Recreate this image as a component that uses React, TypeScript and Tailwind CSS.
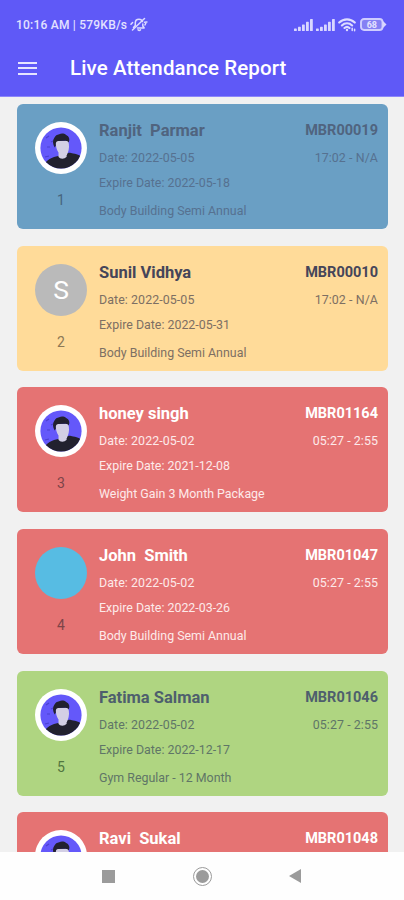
import clsx from "clsx";

interface Member {
  name: string;
  code: string;
  date?: string;
  time?: string;
  expire?: string;
  plan?: string;
  avatar: "photo" | "letter" | "blank";
  card: string;
  title: string;
  text: string;
  count: string;
}

const red = {
  card: "bg-[#e57373]",
  title: "text-white",
  text: "text-[#fdeaea]",
  count: "text-[#7d4448]",
};

const members: Member[] = [
  {
    name: "Ranjit  Parmar",
    code: "MBR00019",
    date: "2022-05-05",
    time: "17:02 - N/A",
    expire: "2022-05-18",
    plan: "Body Building Semi Annual",
    avatar: "photo",
    card: "bg-[#6a9fc4]",
    title: "text-[#50647f]",
    text: "text-[#567190]",
    count: "text-[#47657d]",
  },
  {
    name: "Sunil Vidhya",
    code: "MBR00010",
    date: "2022-05-05",
    time: "17:02 - N/A",
    expire: "2022-05-31",
    plan: "Body Building Semi Annual",
    avatar: "letter",
    card: "bg-[#ffdb99]",
    title: "text-[#454559]",
    text: "text-[#7d6f63]",
    count: "text-[#8c7855]",
  },
  {
    name: "honey singh",
    code: "MBR01164",
    date: "2022-05-02",
    time: "05:27 - 2:55",
    expire: "2021-12-08",
    plan: "Weight Gain 3 Month Package",
    avatar: "photo",
    ...red,
  },
  {
    name: "John  Smith",
    code: "MBR01047",
    date: "2022-05-02",
    time: "05:27 - 2:55",
    expire: "2022-03-26",
    plan: "Body Building Semi Annual",
    avatar: "blank",
    ...red,
  },
  {
    name: "Fatima Salman",
    code: "MBR01046",
    date: "2022-05-02",
    time: "05:27 - 2:55",
    expire: "2022-12-17",
    plan: "Gym Regular - 12 Month",
    avatar: "photo",
    card: "bg-[#afd581]",
    title: "text-[#4e5f6d]",
    text: "text-[#5f7567]",
    count: "text-[#52763f]",
  },
  {
    name: "Ravi  Sukal",
    code: "MBR01048",
    avatar: "photo",
    ...red,
  },
];

const Signal = () => (
  <svg width="19" height="12" viewBox="0 0 19 12" fill="#d9d7ff">
    <rect x="0" y="9.5" width="2.8" height="2.5" rx=".6" />
    <rect x="4" y="7.8" width="2.8" height="4.2" rx=".6" />
    <rect x="8" y="5.4" width="2.8" height="6.6" rx=".6" />
    <rect x="12" y="2.8" width="2.8" height="9.2" rx=".6" />
    <rect x="16" y="0" width="2.8" height="12" rx=".6" />
  </svg>
);

const Muted = () => (
  <svg width="18" height="15" viewBox="0 0 18 15" fill="none" stroke="#dddcff" strokeWidth="1.5" strokeLinecap="round" strokeLinejoin="round">
    <path d="M3.5 10.5 5.3 8.5V6C5.3 3.8 7 2.3 9 2.3c1.8 0 3 .9 3.5 2.3M12.8 7v2l1.4 2H7.5M8 12.8c.7.8 1.8.8 2.5 0" />
    <path d="M2.5 13 14.5 1.5M1 7.2 2.6 5.5M14.5 5.2l2.4-.3M15 8l1.2-2.8" />
  </svg>
);

const Wifi = () => (
  <svg width="19" height="14" viewBox="0 0 19 14" fill="none" stroke="#dddcff" strokeWidth="2.1" strokeLinecap="round">
    <path d="M1.2 4.6c4.4-4.3 11.2-4.3 15.6 0M3.9 7.4c2.9-2.8 7.3-2.8 10.2 0M6.5 10c1.5-1.4 3.5-1.4 5 0" />
    <circle cx="9" cy="12" r="1.2" fill="#dddcff" stroke="none" />
    <path d="M14.2 10.2v2.4M16.6 12.8v-1.6" strokeWidth="1.5" />
  </svg>
);

const Battery = () => (
  <svg width="27" height="13" viewBox="0 0 27 13">
    <rect x="1" y="1" width="21.5" height="11" rx="3" fill="#8580f4" stroke="#cfcdff" strokeWidth="1.9" />
    <path d="M22.5 2.5 26.5 6.5 22.5 10.5Z" fill="#d9d7ff" />
    <text x="11.8" y="9.7" textAnchor="middle" fontSize="9" fontWeight="700" fill="#e3e2ff">
      68
    </text>
  </svg>
);

const Photo = () => (
  <svg className="size-[52px]" viewBox="0 0 52 52">
    <defs>
      <clipPath id="face">
        <circle cx="26" cy="26" r="20.6" />
      </clipPath>
    </defs>
    <circle cx="26" cy="26" r="26" fill="#fff" />
    <g clipPath="url(#face)">
      <rect width="52" height="52" fill="#6458fa" />
      <path d="m11 16 3-2M12 25h3M10 35l4-1M16 20l2-1" stroke="#4b40d0" strokeWidth="1.2" />
      <path d="M8 48c1-8 4-10 11-13l8-2c4-1 6-3 9-2 6 1 9 2 11 5v12H8Z" fill="#22212f" />
      <path d="M20.6 19h12.6c1.2 4 1.2 8-.5 12l-1.2 2.8.2 1c-2.3 2.6-6.8 2.6-8.2 0v-4.3c-2-2.5-2.8-6.5-2.9-11.5Z" fill="#d3cfe5" />
      <path d="M19.7 25.5c-2-3.1-2.3-7-.5-9.5 1.2-2.4 2.8-3.5 5-3.8 2.2-1 5-.8 7 .8 3 1.4 3.9 4 2.6 7.4-.7-1-1.7-1.6-3.2-1.7l-7.5.3c-2.1.2-2.6 2-2.2 4.5Z" fill="#22212f" />
    </g>
  </svg>
);

const Avatar = ({ type, name }: { type: Member["avatar"]; name: string }) => {
  if (type === "photo") return <Photo />;
  return (
    <div
      className={clsx(
        "flex size-[52px] items-center justify-center rounded-full text-[26.5px] text-white",
        type === "letter" ? "bg-[#bababa]" : "bg-[#57bce3]"
      )}
    >
      {type === "letter" && name[0]}
    </div>
  );
};

const MemberCard = ({ member, index }: { member: Member; index: number }) => (
  <div className={clsx("flex h-[125px] shrink-0 rounded-[6px] pr-[10px] pl-[18px]", member.card)}>
    <div className="flex w-[52px] shrink-0 flex-col items-center pt-[18px]">
      <Avatar type={member.avatar} name={member.name} />
      {member.date && <span className={clsx("mt-4 text-[14px] leading-5", member.count)}>{index}</span>}
    </div>
    <div className={clsx("ml-3 flex-1 pt-[17px] text-[12.4px] leading-5", member.text)}>
      <div className={clsx("flex justify-between font-bold", member.title)}>
        <span className="text-[16.5px] whitespace-pre">{member.name}</span>
        <span className="text-[14.5px]">{member.code}</span>
      </div>
      {member.date && (
        <>
          <div className="mt-[7px] flex justify-between tracking-[0.08px]">
            <span>Date: {member.date}</span>
            <span>{member.time}</span>
          </div>
          <div className="mt-[5px]">Expire Date: {member.expire}</div>
          <div className="mt-2">{member.plan}</div>
        </>
      )}
    </div>
  </div>
);

export default function App() {
  return (
    <div className="flex h-[900px] w-[404px] flex-col overflow-hidden bg-[#f1f1f1] font-['Roboto',sans-serif]">
      <header className="h-[97px] shrink-0 border-b border-[#8c86fa] bg-[#5f59f7] text-white">
        <div className="flex h-[49px] items-center justify-between pr-[17px] pl-4 text-[#e3e2ff]">
          <div className="flex items-center gap-[3px] text-[12px]">
            <span className="font-medium tracking-[0.22px]">10:16 AM | 579KB/s</span>
            <Muted />
          </div>
          <div className="flex items-center gap-[3px]">
            <Signal />
            <Signal />
            <Wifi />
            <Battery />
          </div>
        </div>
        <div className="flex h-[38px] items-center pl-[18px]">
          <div className="flex w-[19px] flex-col gap-[3.5px]">
            <div className="h-[2px] bg-[#e6e4ff]" />
            <div className="h-[2px] bg-[#e6e4ff]" />
            <div className="h-[2px] bg-[#e6e4ff]" />
          </div>
          <h1 className="mt-px ml-[33px] text-[20.5px] font-medium tracking-[0.1px]">Live Attendance Report</h1>
        </div>
      </header>
      <main className="flex min-h-0 flex-1 flex-col gap-[16.7px] overflow-hidden pt-[7px] pr-4 pl-[17px]">
        {members.map((member, i) => (
          <MemberCard key={member.code} member={member} index={i + 1} />
        ))}
      </main>
      <nav className="flex h-12 shrink-0 items-center bg-[#fefefe] pl-[102px]">
        <div className="size-[13px] bg-[#9b9b9b]" />
        <div className="ml-[78px] flex size-[19px] items-center justify-center rounded-full border border-[#9b9b9b]">
          <div className="size-[13px] rounded-full bg-[#9b9b9b]" />
        </div>
        <svg className="ml-[77px]" width="12" height="14" viewBox="0 0 12 14">
          <path d="M0 7 12 0v14Z" fill="#9b9b9b" />
        </svg>
      </nav>
    </div>
  );
}
